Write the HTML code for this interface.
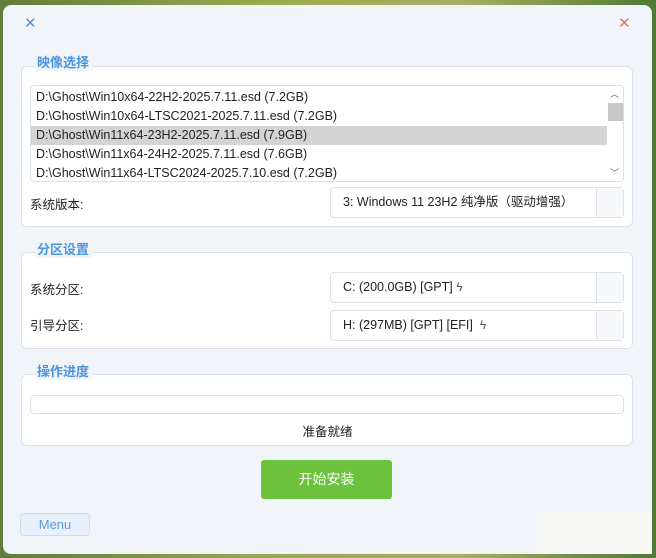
<!DOCTYPE html>
<html><head><meta charset="utf-8"><style>
*{margin:0;padding:0;box-sizing:border-box}
body{width:656px;height:558px;overflow:hidden;background:linear-gradient(90deg,#5f7d3a,#9aa94e 40%,#a8b060 70%,#4f7a35);font-family:"Liberation Sans","Noto Sans CJK SC",sans-serif;font-size:12px;color:#222;position:relative}
.win{position:absolute;left:3px;top:5px;width:649px;height:549px;background:#f1f4f9;border-radius:8px}
.a{position:absolute}
.x{font-size:15px;line-height:15px}
.grp{position:absolute;left:18px;width:612px;background:#fff;border:1px solid #dde1e7;border-radius:6px}
.tt{position:absolute;background:#f1f4f9;color:#4a95e0;font-weight:bold;font-size:13px;padding:0 4px 0 2px;line-height:16px}
.list{position:absolute;left:27px;top:80px;width:594px;height:97px;border:1px solid #dde1e7;border-radius:4px;background:#fff;overflow:hidden}
.row{height:19px;line-height:19px;padding-left:5px;font-size:12.5px;white-space:nowrap}
.sel{background:#d4d4d4}
.cb{position:absolute;left:327px;width:294px;height:31px;border:1px solid #dde1e7;border-radius:4px;background:#fff;line-height:29px;padding-left:12px;font-size:12.5px}
.cb:after{content:"";position:absolute;right:0;top:0;width:26px;height:29px;border-left:1px solid #dde1e7;background:#f7f8fa}
.lbl{position:absolute;left:27px;font-size:12.5px}
.bolt{color:#555;font-size:12px}
</style></head><body>
<div class="win">
<div class="a x" style="left:21px;top:11px;color:#4a95e0">✕</div>
<div class="a x" style="left:615px;top:11px;color:#e8705a">✕</div>

<div class="grp" style="top:61px;height:161px"></div>
<div class="tt" style="left:32px;top:50px">映像选择</div>
<div class="list">
<div class="row" style="margin-top:2px">D:\Ghost\Win10x64-22H2-2025.7.11.esd (7.2GB)</div>
<div class="row">D:\Ghost\Win10x64-LTSC2021-2025.7.11.esd (7.2GB)</div>
<div class="row sel" style="margin-right:16px">D:\Ghost\Win11x64-23H2-2025.7.11.esd (7.9GB)</div>
<div class="row">D:\Ghost\Win11x64-24H2-2025.7.11.esd (7.6GB)</div>
<div class="row">D:\Ghost\Win11x64-LTSC2024-2025.7.10.esd (7.2GB)</div>
<div class="a" style="right:0;top:0;width:16px;height:95px;background:#fff"></div>
<div class="a" style="right:0;top:17px;width:15px;height:18px;background:#c8c8c8"></div>
<div class="a" style="right:4px;top:1px;font-size:9px;color:#666">︿</div>
<div class="a" style="right:4px;top:80px;font-size:9px;color:#666">﹀</div>
</div>
<div class="lbl" style="top:189px">系统版本:</div>
<div class="cb" style="top:182px">3: Windows 11 23H2 纯净版（驱动增强）</div>

<div class="grp" style="top:247px;height:97px"></div>
<div class="tt" style="left:32px;top:237px">分区设置</div>
<div class="lbl" style="top:274px">系统分区:</div>
<div class="cb" style="top:267px">C: (200.0GB) [GPT] <span class="bolt">ϟ</span></div>
<div class="lbl" style="top:310px">引导分区:</div>
<div class="cb" style="top:305px">H: (297MB) [GPT] [EFI] &nbsp;<span class="bolt">ϟ</span></div>

<div class="grp" style="top:369px;height:72px"></div>
<div class="tt" style="left:32px;top:359px">操作进度</div>
<div class="a" style="left:27px;top:390px;width:594px;height:19px;border:1px solid #dde1e7;border-radius:4px;background:#fff"></div>
<div class="a" style="left:0;width:649px;top:416px;text-align:center;font-size:12.5px">准备就绪</div>

<div class="a" style="left:258px;top:455px;width:131px;height:39px;background:#6cc23c;border-radius:3px;color:#fff;font-size:14px;line-height:39px;text-align:center">开始安装</div>
<div class="a" style="left:17px;top:508px;width:70px;height:23px;background:#e8f1fb;border:1px solid #d0dcea;border-radius:4px;color:#5a9be0;font-size:13px;line-height:21px;text-align:center">Menu</div>
<div class="a" style="left:532px;top:507px;width:117px;height:42px;background:#f7f8f6"></div>
</div>
</body></html>
